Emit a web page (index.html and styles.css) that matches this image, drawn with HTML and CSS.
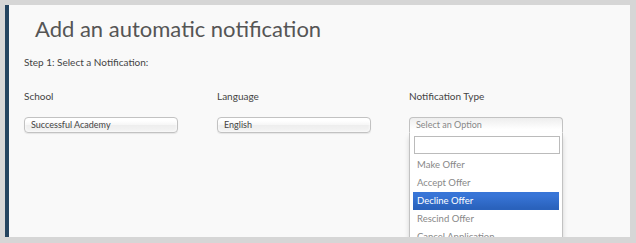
FILE: index.html
```html
<!DOCTYPE html>
<html>
<head>
<meta charset="utf-8">
<link rel="stylesheet" href="styles.css">
</head>
<body>
<div class="frame">
  <div class="panel">
    <h1 class="title">Add an automatic notification</h1>
    <p class="step">Step 1: Select a Notification:</p>
    <div class="fields">
      <div class="field">
        <div class="label">School</div>
        <div class="select">Successful Academy</div>
      </div>
      <div class="field">
        <div class="label">Language</div>
        <div class="select">English</div>
      </div>
      <div class="field">
        <div class="label">Notification Type</div>
        <div class="chosen">
          <div class="select select-open placeholder">Select an Option</div>
          <div class="drop">
            <div class="search"><input class="search-input" type="text"></div>
            <ul class="results">
              <li class="result">Make Offer</li>
              <li class="result">Accept Offer</li>
              <li class="result highlighted">Decline Offer</li>
              <li class="result">Rescind Offer</li>
              <li class="result">Cancel Application</li>
              <li class="result">Waitlist</li>
            </ul>
          </div>
        </div>
      </div>
    </div>
  </div>
</div>
</body>
</html>
```

FILE: styles.css
```css
* { box-sizing: border-box; }
html, body { margin: 0; padding: 0; }
body {
  background: #d6d6d6;
  font-family: Lato, "Open Sans", "Liberation Sans", sans-serif;
  width: 636px;
  height: 243px;
  overflow: hidden;
}
.frame {
  padding: 5px 6px 6px 5px;
  height: 243px;
}
.panel {
  height: 232px;
  background: #f9f9f9;
  border-left: 4px solid #24445f;
  overflow: hidden;
  padding-left: 15px;
}
.title {
  margin: 0;
  padding: 10px 0 0 11px;
  font-size: 22px;
  font-weight: 400;
  line-height: 28px;
  color: #555;
}
.step {
  margin: 12px 0 0;
  font-size: 10px;
  line-height: 14px;
  color: #444;
}
.fields {
  display: grid;
  grid-template-columns: 193px 192px 154px;
  margin-top: 20px;
}
.label {
  font-size: 10px;
  line-height: 14px;
  color: #444;
  height: 14px;
  margin-bottom: 14px;
}
.select {
  width: 154px;
  height: 16px;
  border: 1px solid #c2c2c2;
  border-radius: 4px;
  background: linear-gradient(#ffffff 20%, #f6f6f6 50%, #eeeeee 52%, #f4f4f4 100%);
  box-shadow: inset 0 0 3px #fff, 0 1px 1px rgba(0,0,0,0.08);
  font-size: 9px;
  line-height: 14px;
  color: #444;
  padding-left: 6px;
  white-space: nowrap;
}
.chosen { position: relative; }
.select-open {
  border-radius: 4px 4px 0 0;
  border-bottom-color: #fff;
  background: linear-gradient(#eeeeee 0%, #ffffff 80%);
  box-shadow: none;
}
.placeholder { color: #888; }
.drop {
  position: absolute;
  left: 0;
  top: 16px;
  width: 154px;
  height: 120px;
  background: #fff;
  border: 1px solid #c2c2c2;
  border-top: 0;
  box-shadow: 0 4px 5px rgba(0,0,0,0.15);
  padding: 2px 3px 0 3px;
}
.search { padding: 1px 1px 0 1px; }
.search-input {
  display: block;
  width: 146px;
  height: 18px;
  margin: 0;
  border: 1px solid #bbb;
  background: #fff;
  outline: none;
  padding: 0;
}
.results {
  list-style: none;
  margin: 2px 0 0;
  padding: 0;
}
.result {
  height: 18px;
  line-height: 18px;
  font-size: 9.5px;
  color: #888;
  padding-left: 4px;
  white-space: nowrap;
}
.highlighted {
  color: #fff;
  background: linear-gradient(#3875d7 20%, #2a62bc 90%);
}
```
